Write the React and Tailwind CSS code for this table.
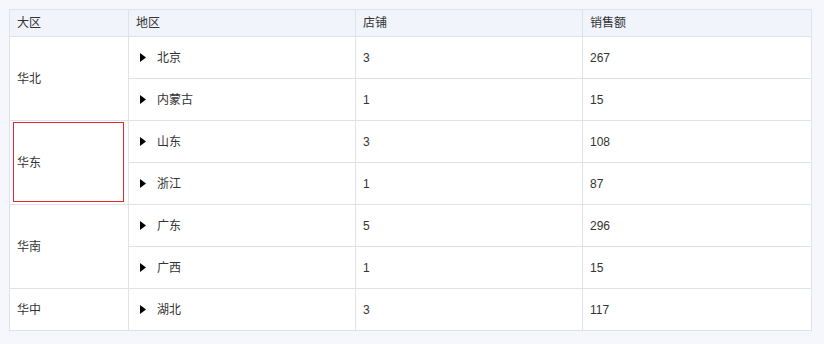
import React from "react";

const groups = [
  { name: "华北", rows: [["北京", 3, 267], ["内蒙古", 1, 15]] },
  { name: "华东", rows: [["山东", 3, 108], ["浙江", 1, 87]], selected: true },
  { name: "华南", rows: [["广东", 5, 296], ["广西", 1, 15]] },
  { name: "华中", rows: [["湖北", 3, 117]] },
];

function Tri() {
  return (
    <svg width="6" height="9" viewBox="0 0 6 9" className="shrink-0">
      <path d="M0 0 L6 4.5 L0 9 Z" fill="#000" />
    </svg>
  );
}

const cell = "border border-[#dfe2e8] px-[7px] align-middle";

export default function App() {
  return (
    <div
      className="w-[824px] h-[344px] bg-[#f5f7fd] pt-[9px] pl-[9px] text-[12px] text-[#333]"
      style={{ fontFamily: '"Liberation Sans", "Noto Sans CJK SC", sans-serif' }}
    >
      <table className="border-collapse table-fixed w-[802px] bg-white">
        <colgroup>
          <col className="w-[119px]" />
          <col className="w-[227px]" />
          <col className="w-[227px]" />
          <col className="w-[229px]" />
        </colgroup>
        <thead>
          <tr className="h-[27px] bg-[#f1f4fb]">
            <th className={`${cell} font-normal text-left`}>大区</th>
            <th className={`${cell} font-normal text-left`}>地区</th>
            <th className={`${cell} font-normal text-left`}>店铺</th>
            <th className={`${cell} font-normal text-left`}>销售额</th>
          </tr>
        </thead>
        <tbody>
          {groups.map((g) =>
            g.rows.map((r, i) => (
              <tr key={g.name + r[0]} className="h-[42px]">
                {i === 0 && (
                  <td rowSpan={g.rows.length} className={`${cell} relative`}>
                    {g.selected && (
                      <div className="absolute top-[1px] left-[3px] right-[4px] bottom-[2px] border border-[#e3262d] pointer-events-none" />
                    )}
                    {g.name}
                  </td>
                )}
                <td className={`${cell} pl-[11px]`}>
                  <div className="flex items-center gap-[11px]">
                    <Tri />
                    <span>{r[0]}</span>
                  </div>
                </td>
                <td className={cell}>{r[1]}</td>
                <td className={cell}>{r[2]}</td>
              </tr>
            ))
          )}
        </tbody>
      </table>
    </div>
  );
}
